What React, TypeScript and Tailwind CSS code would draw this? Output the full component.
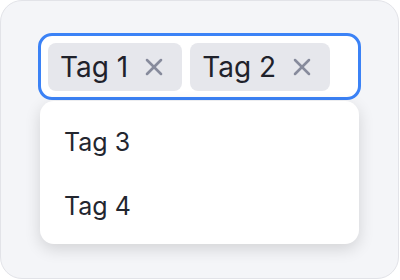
import React, { useState } from 'react';
import { X } from 'lucide-react';

export default function App() {
  const [selected, setSelected] = useState(['Tag 1', 'Tag 2']);
  const options = ['Tag 3', 'Tag 4'];

  const remove = (tag: string) => setSelected((prev) => prev.filter((t) => t !== tag));

  return (
    <div className="w-[400px] h-[280px] bg-white" style={{ fontFamily: 'Inter, "Noto Sans", sans-serif' }}>
      <div className="w-[399px] h-[279px] rounded-[22px] border border-[#e2e3e8] bg-[#f4f5f8] px-[37px] pt-8">
        <div className="relative">
          {/* Input with chips */}
          <div className="flex items-center gap-2 rounded-[14px] border-[3px] border-[#3b82f6] bg-white px-[7px] pt-[7px] pb-[6px]">
            {selected.map((tag) => (
              <div
                key={tag}
                className="flex h-12 items-center gap-3 rounded-lg bg-[#e6e7ec] pl-3 pr-[14px] text-[28px] text-[#1f222b]"
              >
                <span>{tag}</span>
                <button onClick={() => remove(tag)} className="text-[#878b9c]" aria-label={`Remove ${tag}`}>
                  <X size={28} strokeWidth={2.2} />
                </button>
              </div>
            ))}
          </div>

          {/* Dropdown */}
          <div className="absolute left-[2px] right-[2px] top-full mt-px rounded-[14px] bg-white pt-[10px] pb-[5px] shadow-[0_5px_16px_rgba(0,0,0,0.14)]">
            {options.map((opt) => (
              <div key={opt} className="flex h-16 items-center px-6 text-[25px] text-[#23262f]">
                {opt}
              </div>
            ))}
          </div>
        </div>
      </div>
    </div>
  );
}
